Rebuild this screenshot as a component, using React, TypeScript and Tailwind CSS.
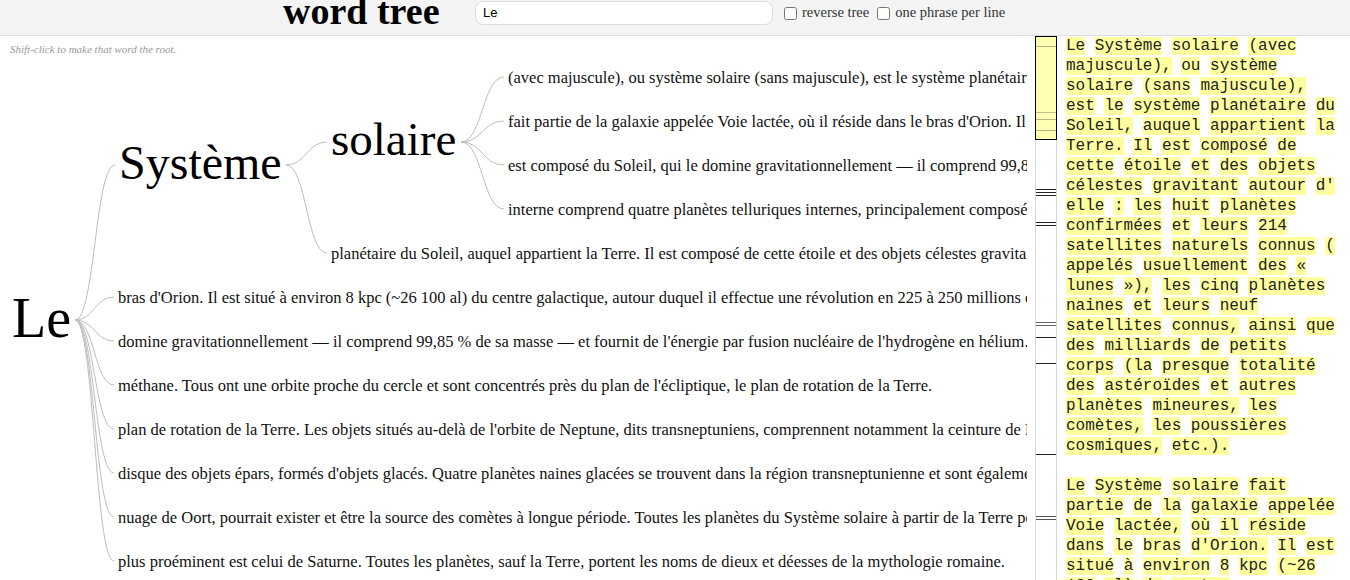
import React from "react";

// nodes of the word tree, positions in the tree canvas (y = centre of the text line)
type Leaf = { x: number; y: number; text: string };

const serif = "font-['Liberation_Serif','Times_New_Roman',serif]";

const solaireLeaves: Leaf[] = [
  { x: 508, y: 41, text: "(avec majuscule), ou système solaire (sans majuscule), est le système planétaire du Soleil, auquel appartient la Terre." },
  { x: 508, y: 85, text: "fait partie de la galaxie appelée Voie lactée, où il réside dans le bras d'Orion. Il est situé à environ 8 kpc" },
  { x: 508, y: 129, text: "est composé du Soleil, qui le domine gravitationnellement — il comprend 99,85 % de sa masse — et fournit de l'énergie" },
  { x: 508, y: 173, text: "interne comprend quatre planètes telluriques internes, principalement composées de roches et de métaux." },
];

const systemeLeaves: Leaf[] = [
  { x: 331, y: 217, text: "planétaire du Soleil, auquel appartient la Terre. Il est composé de cette étoile et des objets célestes gravitant autour d'elle." },
];

const rootLeaves: Leaf[] = [
  { x: 118, y: 261, text: "bras d'Orion. Il est situé à environ 8 kpc (~26 100 al) du centre galactique, autour duquel il effectue une révolution en 225 à 250 millions d'années." },
  { x: 118, y: 305, text: "domine gravitationnellement — il comprend 99,85 % de sa masse — et fournit de l'énergie par fusion nucléaire de l'hydrogène en hélium." },
  { x: 118, y: 349, text: "méthane. Tous ont une orbite proche du cercle et sont concentrés près du plan de l'écliptique, le plan de rotation de la Terre." },
  { x: 118, y: 393, text: "plan de rotation de la Terre. Les objets situés au-delà de l'orbite de Neptune, dits transneptuniens, comprennent notamment la ceinture de Kuiper." },
  { x: 118, y: 437, text: "disque des objets épars, formés d'objets glacés. Quatre planètes naines glacées se trouvent dans la région transneptunienne et sont également." },
  { x: 118, y: 481, text: "nuage de Oort, pourrait exister et être la source des comètes à longue période. Toutes les planètes du Système solaire à partir de la Terre possèdent." },
  { x: 118, y: 525, text: "plus proéminent est celui de Saturne. Toutes les planètes, sauf la Terre, portent les noms de dieux et déesses de la mythologie romaine." },
];

const curve = (sx: number, sy: number, ex: number, ey: number) => {
  const mx = (sx + ex) / 2;
  return `M${sx},${sy} C${mx},${sy} ${mx},${ey} ${ex},${ey}`;
};

const edges: string[] = [
  curve(75, 284, 115, 129),
  ...rootLeaves.map((l) => curve(75, 284, l.x - 4, l.y)),
  curve(286, 129, 327, 106),
  ...systemeLeaves.map((l) => curve(286, 129, l.x - 4, l.y)),
  ...solaireLeaves.map((l) => curve(461, 106, l.x - 4, l.y)),
];

// marks in the overview strip
const marks: { y: number; c: string }[] = [
  { y: 10, c: "#b8b27c" },
  { y: 76, c: "#c4bf8c" },
  { y: 83, c: "#b8b27c" },
  { y: 94, c: "#b8b27c" },
  { y: 153, c: "#222" },
  { y: 156, c: "#222" },
  { y: 159, c: "#222" },
  { y: 186, c: "#222" },
  { y: 189, c: "#222" },
  { y: 286, c: "#666" },
  { y: 289, c: "#666" },
  { y: 301, c: "#222" },
  { y: 327, c: "#222" },
  { y: 418, c: "#222" },
  { y: 480, c: "#555" },
  { y: 483, c: "#555" },
];

const paragraphs = [
  "Le Système solaire (avec majuscule), ou système solaire (sans majuscule), est le système planétaire du Soleil, auquel appartient la Terre. Il est composé de cette étoile et des objets célestes gravitant autour d' elle : les huit planètes confirmées et leurs 214 satellites naturels connus ( appelés usuellement des « lunes »), les cinq planètes naines et leurs neuf satellites connus, ainsi que des milliards de petits corps (la presque totalité des astéroïdes et autres planètes mineures, les comètes, les poussières cosmiques, etc.).",
  "Le Système solaire fait partie de la galaxie appelée Voie lactée, où il réside dans le bras d'Orion. Il est situé à environ 8 kpc (~26 100 al) du centre galactique, autour duquel il effectue une révolution en 225 à 250 millions d'années.",
];

function LeafText({ leaf }: { leaf: Leaf }) {
  return (
    <div
      className="absolute whitespace-nowrap text-[16.5px] leading-none text-[#111]"
      style={{ left: leaf.x, top: leaf.y - 7 }}
    >
      {leaf.text}
    </div>
  );
}

export default function App() {
  return (
    <div className={`w-[1350px] h-[580px] overflow-hidden bg-white flex flex-col ${serif}`}>
      {/* barre du haut */}
      <div className="h-[36px] shrink-0 flex items-start bg-[#f4f4f4] border-b border-[#dddddd]">
        <div className="ml-[283px] w-[192px] -mt-[8px] text-[38px] font-bold leading-none text-black">
          word tree
        </div>
        <div className="flex items-center h-[26px]">
          <div className="w-[298px] h-[24px] rounded-lg border border-[#dddddd] bg-white pl-[7px] flex items-center font-['Liberation_Sans',Arial,sans-serif] text-[13px] font-medium text-black">
            Le
          </div>
          <input type="checkbox" className="m-0 ml-[11px] w-[13px] h-[13px]" readOnly />
          <span className="ml-[5px] text-[14.5px] text-[#333]">reverse tree</span>
          <input type="checkbox" className="m-0 ml-[8px] w-[13px] h-[13px]" readOnly />
          <span className="ml-[5px] text-[14.5px] text-[#333]">one phrase per line</span>
        </div>
      </div>

      <div className="flex h-[544px]">
        {/* arbre */}
        <div className="relative w-[1027px] shrink-0 overflow-hidden">
          <div className="absolute left-[10px] top-[5px] text-[11px] italic text-[#999]">
            Shift-click to make that word the root.
          </div>
          <svg className="absolute left-0 top-0" width="1027" height="544">
            {edges.map((d, i) => (
              <path key={i} d={d} fill="none" stroke="#bdbdbd" strokeWidth="1" />
            ))}
          </svg>
          <div className="absolute left-[12px] top-[254px] text-[56px] leading-none text-black">Le</div>
          <div className="absolute left-[119px] top-[103px] text-[48px] leading-none text-black">Système</div>
          <div className="absolute left-[331px] top-[80px] text-[47px] leading-none text-black">solaire</div>
          {[...solaireLeaves, ...systemeLeaves, ...rootLeaves].map((l) => (
            <LeafText key={l.y} leaf={l} />
          ))}
        </div>

        <div className="w-[8px] shrink-0" />

        {/* aperçu */}
        <div className="relative w-[22px] shrink-0 border-l border-r border-[#d8d8d8]">
          <div className="absolute -left-px top-0 w-[22px] h-[104px] border border-black bg-[#ffffb4]" />
          <svg className="absolute left-0 top-0" width="20" height="544">
            {marks.map((m, i) => (
              <line key={i} x1="0" x2="20" y1={m.y + 0.5} y2={m.y + 0.5} stroke={m.c} strokeWidth="1" />
            ))}
          </svg>
        </div>

        {/* texte */}
        <div className="flex-1 overflow-hidden pl-[9px]">
          <div className="w-[272px] font-['Liberation_Mono','Courier_New',monospace] text-[16px] leading-[20px] text-[#222]">
            {paragraphs.map((p, i) => (
              <p key={i} className="mb-[20px]">
                {p.split(" ").map((w, j) => (
                  <React.Fragment key={j}>
                    {j > 0 && " "}
                    <span className="bg-[#ffffa0]">{w}</span>
                  </React.Fragment>
                ))}
              </p>
            ))}
          </div>
        </div>
      </div>
    </div>
  );
}
